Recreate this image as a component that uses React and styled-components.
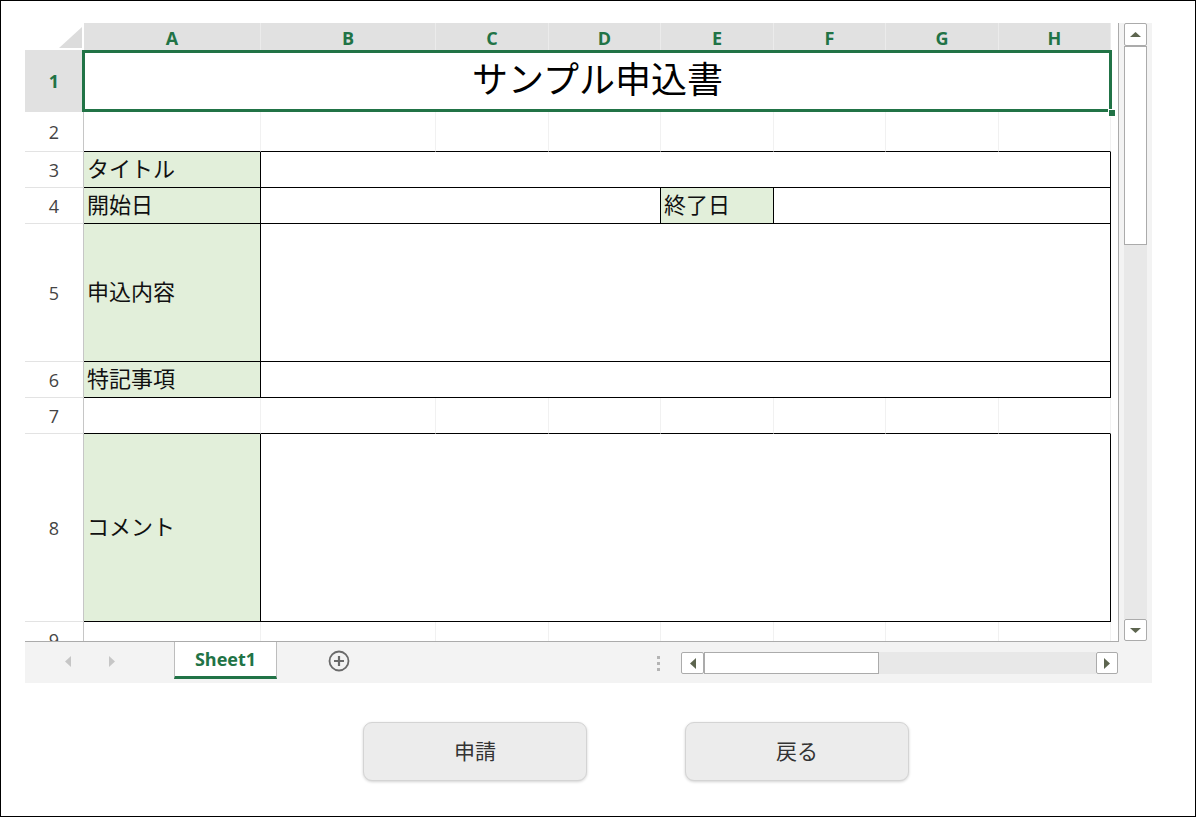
import React from 'react'
import styled, { createGlobalStyle } from 'styled-components'

const GREEN = '#217346'
const GRID = '#f1f1f1'
const LABEL_BG = '#e2efda'
const JP = '"Noto Sans CJK JP", "Noto Sans", sans-serif'
const UI = '"Open Sans", "Noto Sans", sans-serif'

const COLS = ['A', 'B', 'C', 'D', 'E', 'F', 'G', 'H']

const GlobalStyle = createGlobalStyle`
  body {
    margin: 0;
    background: #fff;
    font-family: ${JP};
  }
  * { box-sizing: border-box; }
`

const Frame = styled.div`
  width: 1196px;
  height: 817px;
  border: 1px solid #000;
  padding: 22px 0 0 24px;
`

const Workbook = styled.div`
  width: 1127px;
  display: flex;
  flex-direction: column;
`

const SheetArea = styled.div`
  display: flex;
  height: 619px;
`

const Viewport = styled.div`
  width: 1094px;
  height: 619px;
  overflow: hidden;
  background: #fff;
  border-right: 1px solid #ababab;
  border-bottom: 1px solid #ababab;
`

const Grid = styled.div`
  display: grid;
  grid-template-columns: 59px 177px 175px 113px 112px 113px 112px 113px 112px;
  grid-template-rows: 27px 62px 40px 36px 36px 138px 36px 36px 188px 36px;
  width: 1086px;
`

const Corner = styled.div`
  background: #fff;
  display: flex;
  align-items: flex-end;
  justify-content: flex-end;
  padding: 0 2px 2px 0;
`

const ColHead = styled.div`
  background: #e1e1e1;
  border-right: 1px solid #ebebeb;
  color: ${GREEN};
  font: 700 18px ${UI};
  line-height: 1;
  display: flex;
  align-items: center;
  justify-content: center;
  padding-top: 2px;
`

const RowHead = styled.div`
  background: ${p => (p.$active ? '#e1e1e1' : '#fff')};
  color: ${p => (p.$active ? GREEN : '#444')};
  font-weight: ${p => (p.$active ? 700 : 400)};
  font-family: ${UI};
  font-size: 18px;
  line-height: 1;
  border-right: 1px solid #c6c6c6;
  border-bottom: 1px solid ${p => (p.$active ? '#e1e1e1' : '#e3e3e3')};
  display: flex;
  align-items: center;
  justify-content: center;
`

const Cell = styled.div`
  grid-column: ${p => (p.$span ? `span ${p.$span}` : 'auto')};
  background: ${p => (p.$label ? LABEL_BG : '#fff')};
  border-right: 1px solid ${p => (p.$right ? '#000' : GRID)};
  border-bottom: 1px solid ${p => (p.$bottom ? '#000' : GRID)};
  display: flex;
  align-items: center;
  padding: 0 0 5px 3px;
  font-size: 22px;
  line-height: 1;
  color: #111;
  white-space: nowrap;
  overflow: hidden;
`

const TitleCell = styled.div`
  grid-column: span 8;
  position: relative;
  display: flex;
  align-items: center;
  justify-content: center;
  padding-bottom: 8px;
  font-size: 36px;
  line-height: 1;
  color: #000;
  background: #fff;
`

const Selection = styled.div`
  position: absolute;
  left: -2px;
  top: 0;
  right: -1px;
  bottom: 0;
  border: 3px solid ${GREEN};
  pointer-events: none;
`

const FillHandle = styled.div`
  position: absolute;
  right: -5px;
  bottom: -5px;
  width: 8px;
  height: 8px;
  background: ${GREEN};
  border: 1px solid #fff;
`

const VScroll = styled.div`
  width: 33px;
  background: #f3f3f3;
  display: flex;
  flex-direction: column;
  padding: 0 5px 1px 5px;
`

const ScrollBtn = styled.div`
  width: ${p => p.$w || 23}px;
  height: ${p => p.$h || 23}px;
  flex: none;
  background: #fff;
  border: 1px solid #ababab;
  border-radius: 2px;
  display: flex;
  align-items: center;
  justify-content: center;
`

const VThumb = styled.div`
  height: 199px;
  background: #fff;
  border: 1px solid #ababab;
`

const Track = styled.div`
  flex: 1;
  background: #e8e8e8;
`

const TabBar = styled.div`
  height: 41px;
  background: #f3f3f3;
  display: flex;
  align-items: flex-start;
  padding-right: 34px;
`

const NavArrows = styled.div`
  width: 149px;
  height: 38px;
  display: flex;
  align-items: center;
  padding-left: 40px;
  gap: 38px;
`

const SheetTab = styled.div`
  width: 103px;
  height: 37px;
  background: #fff;
  border-left: 1px solid #bdbdbd;
  border-right: 1px solid #bdbdbd;
  border-bottom: 3px solid ${GREEN};
  color: ${GREEN};
  font: 700 18px ${UI};
  line-height: 1;
  display: flex;
  align-items: center;
  justify-content: center;
`

const AddSheet = styled.div`
  margin: 8px 0 0 51px;
  width: 22px;
  height: 22px;
`

const Spacer = styled.div`
  flex: 1;
`

const Dots = styled.div`
  margin: 14px 21px 0 0;
  display: flex;
  flex-direction: column;
  gap: 3px;

  span {
    width: 3px;
    height: 3px;
    background: #b4b4b4;
  }
`

const HScroll = styled.div`
  width: 437px;
  height: 22px;
  margin-top: 10px;
  display: flex;
`

const HThumb = styled.div`
  width: 175px;
  background: #fff;
  border: 1px solid #ababab;
`

const Actions = styled.div`
  display: flex;
  gap: 98px;
  margin-top: 39px;
  padding-left: 338px;
`

const ActionButton = styled.button`
  width: 224px;
  height: 59px;
  padding: 0 0 3px;
  background: #ececec;
  border: 1px solid #d4d4d4;
  border-radius: 9px;
  box-shadow: 0 1px 3px rgba(0, 0, 0, 0.18);
  font-family: ${JP};
  font-size: 21px;
  line-height: 1;
  color: #333;
  cursor: pointer;
`

const Arrow = ({ dir, color = '#5d654f' }) => {
  const vertical = dir === 'up' || dir === 'down'
  const pts = {
    up: '0,5 5.5,0 11,5',
    down: '0,0 11,0 5.5,5',
    left: '6,0 6,11 0,5.5',
    right: '0,0 0,11 6,5.5',
  }[dir]
  return (
    <svg width={vertical ? 11 : 6} height={vertical ? 5 : 11}>
      <polygon points={pts} fill={color} />
    </svg>
  )
}

const PlusCircle = () => (
  <svg width="22" height="22" viewBox="0 0 22 22">
    <circle cx="11" cy="11" r="9.5" fill="none" stroke="#6a6a6a" strokeWidth="1.8" />
    <path d="M11 6v10M6 11h10" stroke="#6a6a6a" strokeWidth="2.2" />
  </svg>
)

const EmptyRow = ({ n, bottom }) => (
  <>
    <RowHead>{n}</RowHead>
    {COLS.map(c => (
      <Cell key={c} $bottom={bottom} />
    ))}
  </>
)

const FieldRow = ({ n, label }) => (
  <>
    <RowHead>{n}</RowHead>
    <Cell $label $bottom $right>{label}</Cell>
    <Cell $span={7} $bottom $right />
  </>
)

const App = () => (
  <Frame>
    <GlobalStyle />
    <Workbook>
      <SheetArea>
        <Viewport>
          <Grid>
            <Corner>
              <svg width="23" height="21">
                <polygon points="23,0 23,21 0,21" fill="#dcdcdc" />
              </svg>
            </Corner>
            {COLS.map(c => (
              <ColHead key={c}>{c}</ColHead>
            ))}

            <RowHead $active>1</RowHead>
            <TitleCell>
              サンプル申込書
              <Selection />
              <FillHandle />
            </TitleCell>

            <EmptyRow n={2} bottom />
            <FieldRow n={3} label="タイトル" />

            <RowHead>4</RowHead>
            <Cell $label $bottom $right>開始日</Cell>
            <Cell $span={3} $bottom $right />
            <Cell $label $bottom $right>終了日</Cell>
            <Cell $span={3} $bottom $right />

            <FieldRow n={5} label="申込内容" />
            <FieldRow n={6} label="特記事項" />
            <EmptyRow n={7} bottom />
            <FieldRow n={8} label="コメント" />
            <EmptyRow n={9} />
          </Grid>
        </Viewport>
        <VScroll>
          <ScrollBtn><Arrow dir="up" /></ScrollBtn>
          <VThumb />
          <Track />
          <ScrollBtn $h={22}><Arrow dir="down" /></ScrollBtn>
        </VScroll>
      </SheetArea>

      <TabBar>
        <NavArrows>
          <Arrow dir="left" color="#c6c6c6" />
          <Arrow dir="right" color="#c6c6c6" />
        </NavArrows>
        <SheetTab>Sheet1</SheetTab>
        <AddSheet><PlusCircle /></AddSheet>
        <Spacer />
        <Dots><span /><span /><span /></Dots>
        <HScroll>
          <ScrollBtn $h={22}><Arrow dir="left" /></ScrollBtn>
          <HThumb />
          <Track />
          <ScrollBtn $w={22} $h={22}><Arrow dir="right" /></ScrollBtn>
        </HScroll>
      </TabBar>
    </Workbook>

    <Actions>
      <ActionButton>申請</ActionButton>
      <ActionButton>戻る</ActionButton>
    </Actions>
  </Frame>
)

export default App
